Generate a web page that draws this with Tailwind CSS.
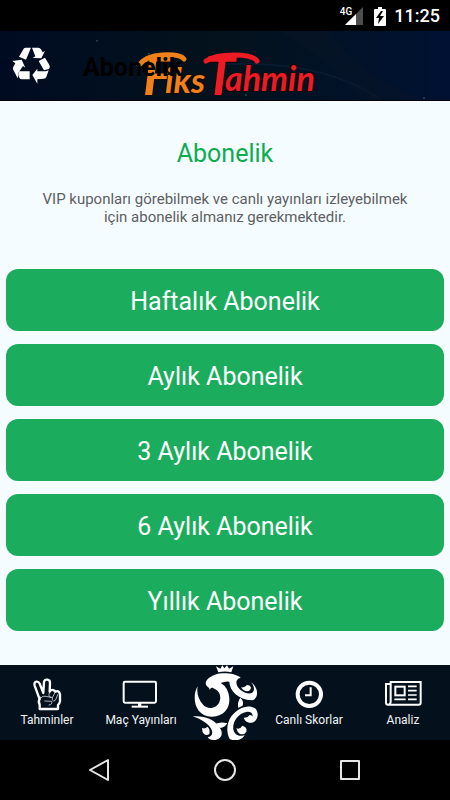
<!DOCTYPE html>
<html lang="tr">
<head>
    <meta charset="UTF-8">
    <meta name="viewport" content="width=device-width, initial-scale=1.0">
    <title>Abonelik</title>
    <script src="https://cdn.jsdelivr.net/npm/@tailwindcss/browser@4"></script>
</head>
<body class="bg-black font-['Roboto',sans-serif] flex flex-col min-h-screen">

    <!-- Status bar -->
    <div class="h-[31px] shrink-0 bg-black text-white flex items-center justify-end gap-2 pr-2.5">
        <div class="flex">
            <span class="text-[10px] leading-3 font-medium">4G</span>
            <svg class="w-5 h-5 -ml-2" viewBox="0 0 20 20">
                <path d="M1 19L19 1V19Z" fill="#4d4d4d"/>
                <path d="M1 19L12 8V19Z" fill="#fff"/>
            </svg>
        </div>
        <svg class="w-3 h-5 ml-0.5" viewBox="0 0 12 20">
            <path d="M4 1H8V3H11Q12 3 12 4V19Q12 20 11 20H1Q0 20 0 19V4Q0 3 1 3H4Z" fill="#fff"/>
            <path d="M7 5L2 12H5L4 18L10 10H6L9 5Z" fill="#000"/>
        </svg>
        <span class="text-lg leading-6 font-medium">11:25</span>
    </div>

    <!-- Header -->
    <header class="relative h-[70px] shrink-0 flex items-center border-b border-black px-3 gap-8 bg-linear-to-r from-[#000b22] via-[#04121c] to-[#001133]">
        <svg class="absolute inset-0 w-full h-full" viewBox="0 0 450 70" preserveAspectRatio="none" fill="none">
            <path d="M220 34Q320 28 380 69" stroke="#0a1c30" stroke-width="2"/>
            <path d="M280 0Q330 30 360 69L420 69Q350 40 330 0Z" fill="#0b1726" opacity=".4"/>
            <circle cx="97" cy="10" r="1" fill="#294052"/>
            <circle cx="149" cy="23" r="1" fill="#294a42"/>
            <circle cx="246" cy="65" r="1" fill="#294a42"/>
            <circle cx="424" cy="68" r="1" fill="#294a52"/>
        </svg>
        <div class="absolute inset-0 flex justify-center">
            <svg class="w-[190px] h-[69px]" viewBox="130 31 190 69" role="img" aria-label="FiksTahmin">
                <g font-family="Lato, sans-serif" font-weight="700" font-style="italic" stroke="#120a0a" stroke-width="2" paint-order="stroke">
                    <text fill="#f08019"><tspan x="143" y="95" font-size="54">F</tspan><tspan x="165" y="93" font-size="35">iks</tspan></text>
                    <text fill="#ed1c24"><tspan x="205" y="95" font-size="54">T</tspan><tspan x="225" y="91" font-size="34">ahmin</tspan></text>
                </g>
                <path d="M139 65Q146 56 162 55Q180 54 184 59" fill="none" stroke="#f08019" stroke-width="5" stroke-linecap="round"/>
                <path d="M206 61Q215 55 234 55Q253 55 257 61" fill="none" stroke="#ed1c24" stroke-width="5" stroke-linecap="round"/>
            </svg>
        </div>
        <button type="button" class="relative" aria-label="Yenile">
            <svg class="w-[39px] h-[37px]" viewBox="36 36 117 111" fill="#fff">
                <path d="M57 65L71 41Q73 38 77 38H93L91 43L78 74Z"/>
                <path d="M96 38H115Q120 38 123 43L128 52L135 48L124 70L98 69L106 64Z"/>
                <path d="M116 78L135 68L148 90Q152 97 147 102L132 106Z"/>
                <path d="M146 106L139 126Q137 131 131 131L112 133V146L97 120L112 101V109H138Z"/>
                <path d="M57 109H89V133H66Q60 133 58 128L55 121Z"/>
                <path d="M53 130L39 103Q38 98 40 95L46 85L37 78L65 74L76 98L69 93L56 112Z"/>
            </svg>
        </button>
        <h1 class="relative pt-1 text-[25px] leading-8 font-bold text-black">Abonelik</h1>
    </header>

    <!-- Content -->
    <main class="grow bg-[#f5fcff] px-1.5 pt-9 pb-[34px]">
        <h2 class="pt-px text-center text-[25px] leading-8 text-[#0dac50]">Abonelik</h2>
        <p class="text-center text-[15px] leading-[18px] text-[#5c6063] max-w-[380px] mx-auto mt-5">
            VIP kuponları görebilmek ve canlı yayınları izleyebilmek için abonelik almanız gerekmektedir.
        </p>
        <div class="flex flex-col gap-[13px] mt-[43px]">
            <button type="button" class="h-[62px] pt-1 rounded-xl bg-[#1bad5d] text-white text-[25px]">Haftalık Abonelik</button>
            <button type="button" class="h-[62px] pt-1 rounded-xl bg-[#1bad5d] text-white text-[25px]">Aylık Abonelik</button>
            <button type="button" class="h-[62px] pt-1 rounded-xl bg-[#1bad5d] text-white text-[25px]">3 Aylık Abonelik</button>
            <button type="button" class="h-[62px] pt-1 rounded-xl bg-[#1bad5d] text-white text-[25px]">6 Aylık Abonelik</button>
            <button type="button" class="h-[62px] pt-1 rounded-xl bg-[#1bad5d] text-white text-[25px]">Yıllık Abonelik</button>
        </div>
    </main>

    <!-- Tab bar -->
    <nav class="h-[75px] shrink-0 bg-[#04111d] text-[#f2f4f5] text-xs leading-4 flex">
        <a href="#" class="flex-1 flex flex-col items-center pt-[11px]">
            <svg class="w-10 h-9" viewBox="81 48 120 108" fill="none" stroke="#fff" stroke-linecap="round" stroke-linejoin="round">
                <path stroke-width="7" d="M119 118L104 77Q101 67 109 65Q116 64 119 71L130 99L132 66Q134 58 142 59Q150 60 150 68L149 95Q154 87 162 91L166 95Q174 91 178 97L180 104V124Q179 130 174 135V147H119V134Q114 125 119 113"/>
                <path stroke-width="2" d="M149 96Q145 106 148 110L157 113L166 96M157 113Q154 121 161 123Q166 123 168 117L173 104M122 114Q128 106 138 109L152 112M134 123L155 124Q158 134 147 135"/>
            </svg>
            Tahminler
        </a>
        <a href="#" class="flex-1 flex flex-col items-center pt-[11px]">
            <svg class="w-10 h-9" viewBox="363 48 120 108" fill="none" stroke="#fff">
                <rect x="371" y="65" width="97" height="63" rx="4" stroke-width="6"/>
                <path d="M419 128V140" stroke-width="10"/>
                <path d="M395 140H444" stroke-width="6"/>
            </svg>
            Maç Yayınları
        </a>
        <a href="#" class="w-[74px]" aria-label="Ana sayfa">
            <svg class="w-full h-[75px]" viewBox="24 30 222 225" fill="#fff">
                <path d="M108 34L121 41L127 31L133 40L141 31L147 41L160 34L154 52Q134 47 115 52Z"/>
                <path d="M53 94C34 125 44 186 96 185C140 184 154 148 146 118C142 101 134 91 122 84Q136 78 148 80C149 108 175 133 215 136C236 134 238 98 213 82C224 94 226 111 212 115C190 118 164 95 170 77Q173 70 182 68C165 54 125 52 105 59C83 66 70 83 81 94Q89 98 90 106C90 97 97 95 106 103C119 109 124 126 119 138C112 162 82 166 68 148C56 133 49 115 53 94Z"/>
                <path d="M183 97Q194 99 201 90Q210 90 213 97Q213 106 203 109Q190 109 183 97Z"/>
                <path d="M181 128Q194 141 187 153Q181 154 175 159Q171 142 181 128Z"/>
                <path d="M105 207Q122 199 142 205Q135 217 120 219Q115 212 105 207Z"/>
                <path d="M38 184C72 181 100 192 113 210C132 229 128 250 109 254C98 257 86 253 83 246C93 246 99 238 96 227C89 208 65 193 38 184Z"/>
                <path d="M66 219Q76 223 82 215Q91 222 88 237Q80 243 72 237Q66 231 66 219Z"/>
                <path d="M149 252C138 231 140 204 154 184C174 158 204 147 224 159C238 170 235 194 220 202C207 207 195 199 192 188C200 196 209 193 216 187C222 178 212 168 199 171C174 176 157 201 160 223C163 239 176 247 194 240C187 256 164 260 149 252Z"/>
                <path d="M169 220Q180 224 187 212Q203 216 199 230Q193 241 180 237Q171 231 169 220Z"/>
                <path d="M191 188Q202 190 209 180Q218 181 222 191Q218 202 206 201Q196 199 191 188Z"/>
            </svg>
        </a>
        <a href="#" class="flex-1 flex flex-col items-center pt-[11px]">
            <svg class="w-10 h-9" viewBox="87 48 120 108" fill="none" stroke="#fff">
                <circle cx="148" cy="103" r="35" stroke-width="12"/>
                <path d="M152 82V106H135" stroke-width="6"/>
            </svg>
            Canlı Skorlar
        </a>
        <a href="#" class="flex-1 flex flex-col items-center pt-[11px]">
            <svg class="w-10 h-9" viewBox="369 48 120 108" fill="none" stroke="#fff" stroke-width="6">
                <path d="M392 66H482V128Q482 134 476 134H384Q378 134 378 128V72H392M392 63V126Q392 132 386 134"/>
                <rect x="406" y="80" width="28" height="26"/>
                <path d="M444 79H470M444 92H470M444 105H470M403 118H437M444 118H470" stroke-width="5"/>
            </svg>
            Analiz
        </a>
    </nav>

    <!-- System buttons -->
    <div class="h-[60px] shrink-0 bg-black flex items-center justify-center gap-[101px]">
        <button type="button" aria-label="Geri">
            <svg class="w-6 h-6" viewBox="0 0 24 24" fill="none" stroke="#e6e6e6" stroke-width="2" stroke-linejoin="round"><path d="M2 12L20 2V22Z"/></svg>
        </button>
        <button type="button" aria-label="Ana ekran">
            <svg class="w-6 h-6" viewBox="0 0 24 24" fill="none" stroke="#e6e6e6" stroke-width="2"><circle cx="12" cy="12" r="10"/></svg>
        </button>
        <button type="button" aria-label="Son uygulamalar">
            <svg class="w-6 h-6" viewBox="0 0 24 24" fill="none" stroke="#e6e6e6" stroke-width="2" stroke-linejoin="round"><path d="M3 3H21V21H3Z"/></svg>
        </button>
    </div>
</body>
</html>
